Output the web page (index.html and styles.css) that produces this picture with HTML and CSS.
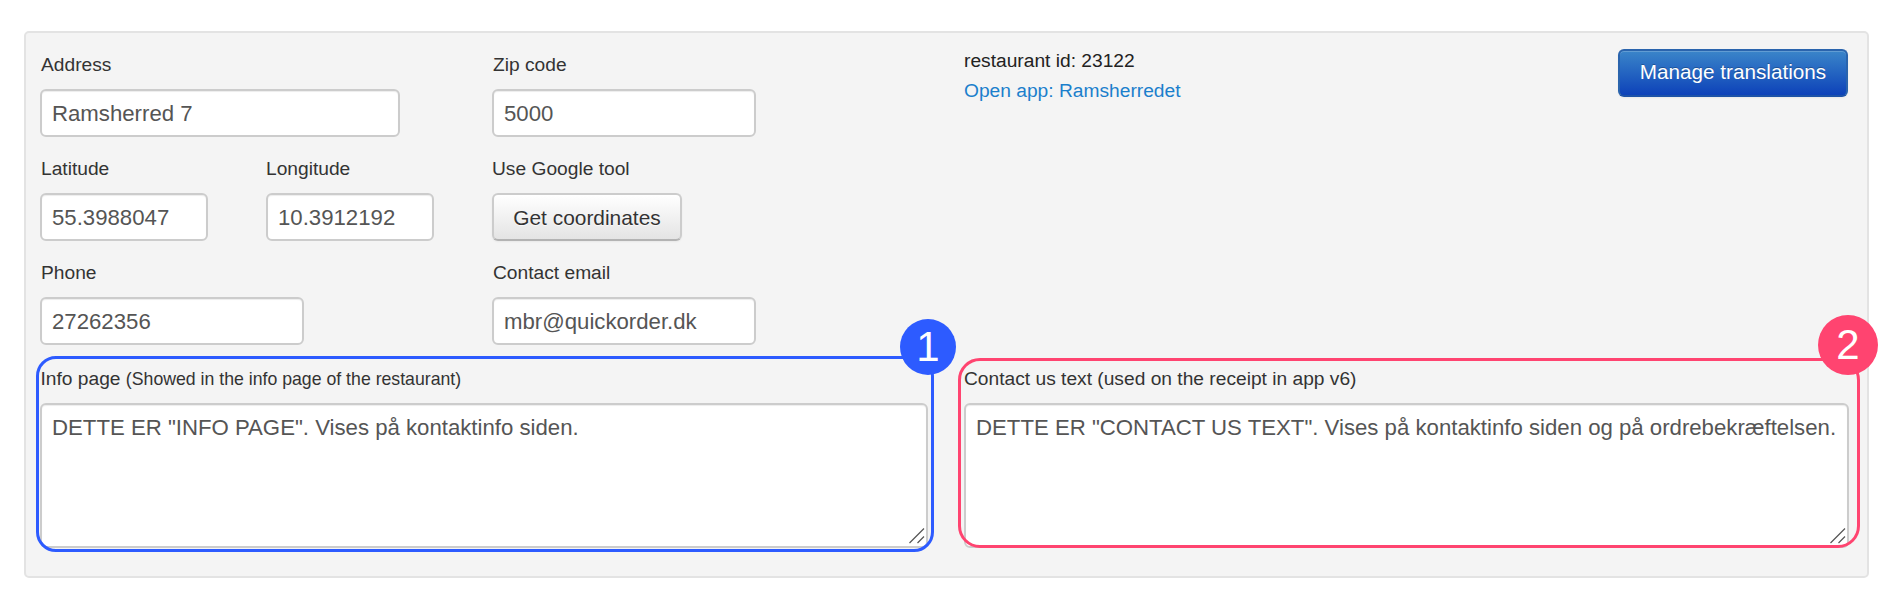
FILE: index.html
```html
<!DOCTYPE html>
<html lang="en">
<head>
<meta charset="utf-8">
<title>Restaurant settings</title>
<link rel="stylesheet" href="styles.css">
</head>
<body>
<form class="panel">
  <div class="top">
    <div class="form-col">
      <div class="row">
        <div class="field col-wide"><label>Address</label><input class="input w-360" type="text" value="Ramsherred 7"></div>
        <div class="field"><label>Zip code</label><input class="input w-264" type="text" value="5000"></div>
      </div>
      <div class="row">
        <div class="field col-half"><label>Latitude</label><input class="input w-168" type="text" value="55.3988047"></div>
        <div class="field col-half"><label class="flush">Longitude</label><input class="input w-168" type="text" value="10.3912192"></div>
        <div class="field"><label class="flush">Use Google tool</label><button class="btn" type="button">Get coordinates</button></div>
      </div>
      <div class="row row-last">
        <div class="field col-wide"><label>Phone</label><input class="input w-264" type="text" value="27262356"></div>
        <div class="field"><label>Contact email</label><input class="input w-264" type="text" value="mbr@quickorder.dk"></div>
      </div>
    </div>
    <div class="info-col">
      <div class="meta">
        <div class="rest-id">restaurant id: 23122</div>
        <a class="open-link" href="#">Open app: Ramsherredet</a>
      </div>
      <button class="btn btn-primary" type="button">Manage translations</button>
    </div>
  </div>
  <div class="bottom">
    <div class="area area-info">
      <label class="area-label">Info page <small>(Showed in the info page of the restaurant)</small></label>
      <textarea class="textarea">DETTE ER "INFO PAGE". Vises på kontaktinfo siden.</textarea>
      <svg class="grip" viewBox="0 0 16 16" aria-hidden="true"><path d="M0.5 15 15 0.5M8.5 15 15 8.5"/></svg>
      <div class="frame frame-blue"><span class="badge badge-blue">1</span></div>
    </div>
    <div class="area area-contact">
      <label class="area-label">Contact us text (used on the receipt in app v6)</label>
      <textarea class="textarea">DETTE ER "CONTACT US TEXT". Vises på kontaktinfo siden og på ordrebekræftelsen.</textarea>
      <svg class="grip" viewBox="0 0 16 16" aria-hidden="true"><path d="M0.5 15 15 0.5M8.5 15 15 8.5"/></svg>
      <div class="frame frame-pink"><span class="badge badge-pink">2</span></div>
    </div>
  </div>
</form>
</body>
</html>
```
FILE: styles.css
```css
* { box-sizing: border-box; }
html, body { margin: 0; padding: 0; background: #fff; }
body {
  font-family: "Liberation Sans", Arial, sans-serif;
  color: #333;
  height: 596px;
  overflow: hidden;
}
.panel {
  width: 1845px;
  height: 547px;
  margin: 31px 0 0 24px;
  padding: 19px 18px 28px 14px;
  background: #f4f4f4;
  border: 2px solid #e3e3e3;
  border-radius: 5px;
}
.top { display: flex; }
.form-col { width: 924px; flex: none; }
.row { display: flex; height: 104px; }
.row-last { height: 107px; }
.col-wide { width: 452px; }
.col-half { width: 226px; }
.field { display: flex; flex-direction: column; align-items: flex-start; }
label {
  display: block;
  font-size: 19.2px;
  line-height: 24px;
  padding: 1px 0 0 1px;
  height: 24px;
  margin-bottom: 13px;
}
label.flush { padding-left: 0; }
.input, .textarea {
  font-family: inherit;
  font-size: 22.2px;
  color: #555;
  background: #fff;
  border: 2px solid #ccc;
  border-radius: 6px;
  box-shadow: inset 0 1px 1px rgba(0, 0, 0, .075);
  outline: none;
}
.input { height: 48px; padding: 2px 10px 0; }
.w-360 { width: 360px; }
.w-264 { width: 264px; }
.w-168 { width: 168px; }
.btn {
  width: 190px;
  height: 48px;
  padding: 2px 0 0;
  font-family: inherit;
  font-size: 20.9px;
  color: #333;
  background: linear-gradient(#fff, #e4e4e4);
  border: 2px solid #ccc;
  border-bottom-color: #b3b3b3;
  border-radius: 6px;
  box-shadow: inset 0 1px 0 rgba(255, 255, 255, .2), 0 1px 2px rgba(0, 0, 0, .05);
  text-shadow: 0 1px 1px rgba(255, 255, 255, .75);
}
.info-col { flex: 1; display: flex; justify-content: space-between; align-items: flex-start; }
.meta { font-size: 19.2px; line-height: 30px; margin-top: -6px; }
.open-link { color: #1b7fcc; text-decoration: none; }
.rest-id { color: #222; }
.btn-primary {
  width: 230px;
  margin-top: -3px;
  margin-right: 1px;
  padding: 0 0 3px;
  font-size: 20.7px;
  color: #fff;
  background: linear-gradient(#3a85c9, #0d42b9);
  border: 2px solid #2a64ad;
  border-bottom-color: #1c52a8;
  text-shadow: 0 -1px 0 rgba(0, 0, 0, .25);
}
.bottom { display: flex; gap: 36px; }
.area { position: relative; display: flex; flex-direction: column; height: 181px; }
.area-info { width: 888px; }
.area-contact { width: 885px; }
label.area-label { margin-bottom: 12px; padding: 0; }
.area-info .area-label { padding-left: .5px; }
.area-label small { font-size: 17.7px; }
.textarea {
  flex: 1;
  width: 100%;
  padding: 9px 10px 10px;
  line-height: 28px;
  resize: none;
  overflow: hidden;
}
.grip {
  position: absolute;
  right: 3px;
  bottom: 4px;
  width: 16px;
  height: 16px;
  fill: none;
  stroke: #555;
  stroke-width: 1.2;
}
.frame { position: absolute; border-style: solid; border-width: 3px; pointer-events: none; }
.frame-blue { top: -11px; left: -4px; right: -6px; bottom: -4px; border-color: #2d5bff; border-radius: 20px; }
.frame-pink { top: -9px; left: -6px; right: -11px; bottom: 0; border-color: #ff4470; border-radius: 22px; }
.badge {
  position: absolute;
  display: flex;
  align-items: center;
  justify-content: center;
  border-radius: 50%;
  color: #fff;
  font-family: "Liberation Sans", Arial, sans-serif;
  font-size: 42px;
  line-height: 1;
}
.badge-blue { width: 56px; height: 56px; top: -40px; right: -25px; background: #2d5bff; }
.badge-pink { width: 60px; height: 60px; top: -46px; right: -21px; background: #ff4470; }
```
